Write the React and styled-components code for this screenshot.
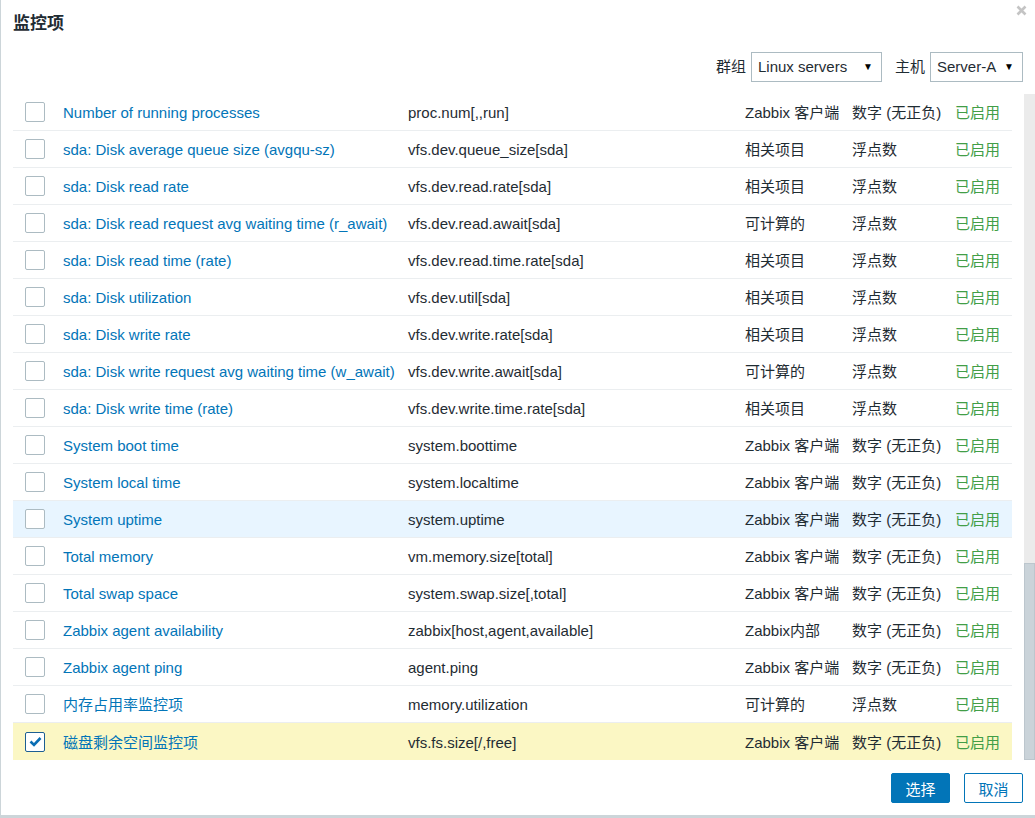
import React, { useLayoutEffect, useRef, useState } from 'react';
import styled, { createGlobalStyle } from 'styled-components';

const colors = {
  text: '#1f2c33',
  link: '#0275b8',
  green: '#429e47',
  border: '#acbbc2',
  rowLine: '#ebeef0',
  hover: '#e8f5ff',
  selected: '#fbf7c4',
};

const fontStack = '"Liberation Sans", Arial, "Noto Sans CJK SC", sans-serif';

const GlobalStyle = createGlobalStyle`
  html, body {
    margin: 0;
    padding: 0;
    background: #ccd5d9;
    overflow: hidden;
  }
  body {
    font-family: ${fontStack};
    font-size: 15px;
    color: ${colors.text};
  }
`;

const Dialog = styled.div`
  margin-left: 1px;
  width: 1034px;
  height: 815px;
  background: #fff;
  display: flex;
  flex-direction: column;
`;

const Header = styled.div`
  display: flex;
  justify-content: space-between;
  align-items: flex-start;
  height: 52px;
  padding-left: 12px;
`;

const Title = styled.h4`
  margin: 13px 0 0;
  font-size: 17px;
  font-weight: 700;
  line-height: 22px;
  color: ${colors.text};
`;

const CloseButton = styled.button`
  border: 0;
  background: none;
  padding: 0;
  margin: 5px 7px 0 0;
  width: 12px;
  height: 12px;
  cursor: pointer;
  display: flex;
`;

const FilterBar = styled.div`
  display: flex;
  justify-content: flex-end;
  align-items: center;
  gap: 13px;
  padding-right: 12px;
  height: 30px;
`;

const FilterGroup = styled.div`
  display: flex;
  align-items: center;
  gap: 5px;
`;

const FilterLabel = styled.span`
  line-height: 20px;
`;

const Select = styled.div`
  box-sizing: border-box;
  display: flex;
  align-items: center;
  justify-content: space-between;
  width: ${p => p.$width}px;
  height: 30px;
  padding: 0 8px 0 6px;
  border: 1px solid ${colors.border};
  background: #fff;
  line-height: 20px;
`;

const Arrow = styled.span`
  font-size: 10px;
  line-height: 10px;
  color: #000;
`;

const ScrollArea = styled.div`
  margin-top: 12px;
  height: 666px;
  display: flex;
`;

const Scroller = styled.div`
  flex: 1;
  overflow-y: scroll;
  padding-left: 12px;
  scrollbar-width: none;
  &::-webkit-scrollbar {
    display: none;
  }
`;

const Track = styled.div`
  width: 11px;
  background: #ebebeb;
  display: flex;
  flex-direction: column;
`;

const Thumb = styled.div`
  box-sizing: border-box;
  background: #cad3d9;
  border: 1px solid #bcc6cd;
`;

const Table = styled.div`
  width: 999px;
`;

const Row = styled.div`
  display: grid;
  grid-template-columns: 50px 345px 337px 107px 103px 1fr;
  align-items: center;
  height: 37px;
  box-sizing: border-box;
  border-bottom: 1px solid ${colors.rowLine};
  background: ${p => (p.$selected ? colors.selected : p.$hover ? colors.hover : '#fff')};
  &:last-child {
    border-bottom: 0;
  }
`;

const HeadCell = styled.div`
  font-weight: 700;
  color: #768d99;
  line-height: 20px;
`;

const Cell = styled.div`
  white-space: nowrap;
  line-height: 20px;
  padding-top: 2px;
  color: ${p => p.$color || colors.text};
`;

const CheckCell = styled.div`
  display: flex;
  padding-left: 12px;
`;

const Checkbox = styled.span`
  box-sizing: border-box;
  width: 20px;
  height: 20px;
  border: 1px solid ${p => (p.$checked ? '#1d5f92' : colors.border)};
  border-radius: 2px;
  background: #fff;
  display: flex;
  align-items: center;
  justify-content: center;
`;

const Footer = styled.div`
  display: flex;
  justify-content: flex-end;
  gap: 14px;
  padding: 13px 12px 0 0;
`;

const Button = styled.button`
  box-sizing: border-box;
  width: 59px;
  height: 30px;
  border-radius: 2px;
  border: 1px solid ${colors.link};
  background: ${p => (p.$primary ? colors.link : '#fff')};
  color: ${p => (p.$primary ? '#fff' : colors.link)};
  font-family: ${fontStack};
  font-size: 15px;
  padding: 0;
  cursor: pointer;
`;

const hidden = [
  ['/: Free inodes in %', 'vfs.fs.inode[/,pfree]', '相关项目', '浮点数'],
  ['/: Space utilization', 'vfs.fs.size[/,pused]', '相关项目', '浮点数'],
  ['/: Total space', 'vfs.fs.size[/,total]', '相关项目', '数字 (无正负)'],
  ['/: Used space', 'vfs.fs.size[/,used]', '相关项目', '数字 (无正负)'],
  ['/boot: Free inodes in %', 'vfs.fs.inode[/boot,pfree]', '相关项目', '浮点数'],
  ['/boot: Space utilization', 'vfs.fs.size[/boot,pused]', '相关项目', '浮点数'],
  ['/boot: Total space', 'vfs.fs.size[/boot,total]', '相关项目', '数字 (无正负)'],
  ['/boot: Used space', 'vfs.fs.size[/boot,used]', '相关项目', '数字 (无正负)'],
  ['Available memory', 'vm.memory.size[available]', 'Zabbix 客户端', '数字 (无正负)'],
  ['Available memory in %', 'vm.memory.size[pavailable]', 'Zabbix 客户端', '浮点数'],
  ['Checksum of /etc/passwd', 'vfs.file.cksum[/etc/passwd,sha256]', 'Zabbix 客户端', '字符'],
  ['Context switches per second', 'system.cpu.switches', 'Zabbix 客户端', '浮点数'],
  ['CPU guest nice time', 'system.cpu.util[,guest_nice]', 'Zabbix 客户端', '浮点数'],
  ['CPU guest time', 'system.cpu.util[,guest]', 'Zabbix 客户端', '浮点数'],
  ['CPU idle time', 'system.cpu.util[,idle]', 'Zabbix 客户端', '浮点数'],
  ['CPU interrupt time', 'system.cpu.util[,interrupt]', 'Zabbix 客户端', '浮点数'],
  ['CPU iowait time', 'system.cpu.util[,iowait]', 'Zabbix 客户端', '浮点数'],
  ['CPU nice time', 'system.cpu.util[,nice]', 'Zabbix 客户端', '浮点数'],
  ['CPU softirq time', 'system.cpu.util[,softirq]', 'Zabbix 客户端', '浮点数'],
  ['CPU steal time', 'system.cpu.util[,steal]', 'Zabbix 客户端', '浮点数'],
  ['CPU system time', 'system.cpu.util[,system]', 'Zabbix 客户端', '浮点数'],
  ['CPU user time', 'system.cpu.util[,user]', 'Zabbix 客户端', '浮点数'],
  ['CPU utilization', 'system.cpu.util', '相关项目', '浮点数'],
  ['Free swap space', 'system.swap.size[,free]', 'Zabbix 客户端', '数字 (无正负)'],
  ['Free swap space in %', 'system.swap.size[,pfree]', 'Zabbix 客户端', '浮点数'],
  ['Host name of Zabbix agent running', 'agent.hostname', 'Zabbix 客户端', '字符'],
  ['Interface ens33: Bits received', 'net.if.in["ens33"]', 'Zabbix 客户端', '数字 (无正负)'],
  ['Interface ens33: Bits sent', 'net.if.out["ens33"]', 'Zabbix 客户端', '数字 (无正负)'],
  ['Interface ens33: Inbound packets discarded', 'net.if.in["ens33",dropped]', 'Zabbix 客户端', '数字 (无正负)'],
  ['Interface ens33: Inbound packets with errors', 'net.if.in["ens33",errors]', 'Zabbix 客户端', '数字 (无正负)'],
  ['Interface ens33: Operational status', 'net.if.status["ens33"]', 'Zabbix 客户端', '数字 (无正负)'],
  ['Interrupts per second', 'system.cpu.intr', 'Zabbix 客户端', '浮点数'],
  ['Load average (1m avg)', 'system.cpu.load[all,avg1]', 'Zabbix 客户端', '浮点数'],
  ['Load average (5m avg)', 'system.cpu.load[all,avg5]', 'Zabbix 客户端', '浮点数'],
  ['Load average (15m avg)', 'system.cpu.load[all,avg15]', 'Zabbix 客户端', '浮点数'],
  ['Maximum number of open file descriptors', 'kernel.maxfiles', 'Zabbix 客户端', '数字 (无正负)'],
  ['Maximum number of processes', 'kernel.maxproc', 'Zabbix 客户端', '数字 (无正负)'],
  ['Memory utilization', 'vm.memory.utilization', '相关项目', '浮点数'],
  ['Number of CPUs', 'system.cpu.num', 'Zabbix 客户端', '数字 (无正负)'],
  ['Number of logged in users', 'system.users.num', 'Zabbix 客户端', '数字 (无正负)'],
  ['Number of processes', 'proc.num[]', 'Zabbix 客户端', '数字 (无正负)'],
  ['Operating system', 'system.sw.os', 'Zabbix 客户端', '字符'],
];

const visible = [
  ['Number of running processes', 'proc.num[,,run]', 'Zabbix 客户端', '数字 (无正负)'],
  ['sda: Disk average queue size (avgqu-sz)', 'vfs.dev.queue_size[sda]', '相关项目', '浮点数'],
  ['sda: Disk read rate', 'vfs.dev.read.rate[sda]', '相关项目', '浮点数'],
  ['sda: Disk read request avg waiting time (r_await)', 'vfs.dev.read.await[sda]', '可计算的', '浮点数'],
  ['sda: Disk read time (rate)', 'vfs.dev.read.time.rate[sda]', '相关项目', '浮点数'],
  ['sda: Disk utilization', 'vfs.dev.util[sda]', '相关项目', '浮点数'],
  ['sda: Disk write rate', 'vfs.dev.write.rate[sda]', '相关项目', '浮点数'],
  ['sda: Disk write request avg waiting time (w_await)', 'vfs.dev.write.await[sda]', '可计算的', '浮点数'],
  ['sda: Disk write time (rate)', 'vfs.dev.write.time.rate[sda]', '相关项目', '浮点数'],
  ['System boot time', 'system.boottime', 'Zabbix 客户端', '数字 (无正负)'],
  ['System local time', 'system.localtime', 'Zabbix 客户端', '数字 (无正负)'],
  ['System uptime', 'system.uptime', 'Zabbix 客户端', '数字 (无正负)', 'hover'],
  ['Total memory', 'vm.memory.size[total]', 'Zabbix 客户端', '数字 (无正负)'],
  ['Total swap space', 'system.swap.size[,total]', 'Zabbix 客户端', '数字 (无正负)'],
  ['Zabbix agent availability', 'zabbix[host,agent,available]', 'Zabbix内部', '数字 (无正负)'],
  ['Zabbix agent ping', 'agent.ping', 'Zabbix 客户端', '数字 (无正负)'],
  ['内存占用率监控项', 'memory.utilization', '可计算的', '浮点数'],
  ['磁盘剩余空间监控项', 'vfs.fs.size[/,free]', 'Zabbix 客户端', '数字 (无正负)', 'selected'],
];

const items = [...hidden, ...visible];

const CheckIcon = () => (
  <svg width="13" height="11" viewBox="0 0 13 11">
    <path d="M1.5 5.5 L5 9 L11.5 2" fill="none" stroke="#0a6eb4" strokeWidth="2.6" />
  </svg>
);

const CloseIcon = () => (
  <svg width="11" height="11" viewBox="0 0 11 11">
    <path d="M1.5 1.5 L9.5 9.5 M9.5 1.5 L1.5 9.5" stroke="#c4c4c4" strokeWidth="2.6" />
  </svg>
);

const App = () => {
  const scrollRef = useRef(null);
  const [thumb, setThumb] = useState({ top: 0, height: 0 });

  useLayoutEffect(() => {
    const el = scrollRef.current;
    if (!el) return;
    el.scrollTop = el.scrollHeight;
    const ratio = el.clientHeight / el.scrollHeight;
    const height = Math.max(20, Math.round(el.clientHeight * ratio));
    const top = Math.round((el.scrollTop / el.scrollHeight) * el.clientHeight);
    setThumb({ top, height });
  }, []);

  return (
    <>
      <GlobalStyle />
      <Dialog>
        <Header>
          <Title>监控项</Title>
          <CloseButton aria-label="close">
            <CloseIcon />
          </CloseButton>
        </Header>

        <FilterBar>
          <FilterGroup>
            <FilterLabel>群组</FilterLabel>
            <Select $width={131}>
              Linux servers<Arrow>▼</Arrow>
            </Select>
          </FilterGroup>
          <FilterGroup>
            <FilterLabel>主机</FilterLabel>
            <Select $width={93}>
              Server-A<Arrow>▼</Arrow>
            </Select>
          </FilterGroup>
        </FilterBar>

        <ScrollArea>
          <Scroller ref={scrollRef}>
            <Table>
              <Row>
                <CheckCell>
                  <Checkbox />
                </CheckCell>
                <HeadCell>名称</HeadCell>
                <HeadCell>键值</HeadCell>
                <HeadCell>类型</HeadCell>
                <HeadCell>信息类型</HeadCell>
                <HeadCell>状态</HeadCell>
              </Row>
              {items.map(([name, key, type, info, state]) => (
                <Row key={key + name} $hover={state === 'hover'} $selected={state === 'selected'}>
                  <CheckCell>
                    <Checkbox $checked={state === 'selected'}>
                      {state === 'selected' && <CheckIcon />}
                    </Checkbox>
                  </CheckCell>
                  <Cell $color={colors.link}>{name}</Cell>
                  <Cell>{key}</Cell>
                  <Cell>{type}</Cell>
                  <Cell>{info}</Cell>
                  <Cell $color={colors.green}>已启用</Cell>
                </Row>
              ))}
            </Table>
          </Scroller>
          <Track>
            <Thumb style={{ marginTop: thumb.top, height: thumb.height }} />
          </Track>
        </ScrollArea>

        <Footer>
          <Button $primary>选择</Button>
          <Button>取消</Button>
        </Footer>
      </Dialog>
    </>
  );
};

export default App;
